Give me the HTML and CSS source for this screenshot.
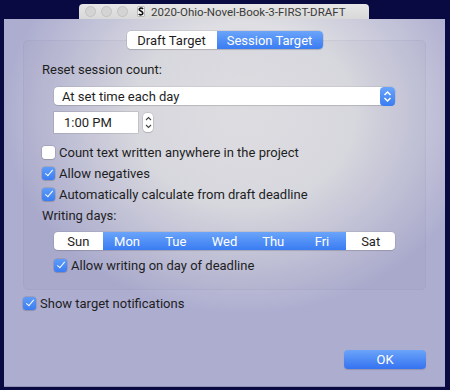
FILE: index.html
```html
<!DOCTYPE html>
<html lang="en">
  <head>
    <meta charset="UTF-8" />
    <title>Project Targets</title>
    <link rel="stylesheet" href="styles.css">
  </head>
  <body>
    <div class="titlebar">
      <div class="lights">
        <span class="light"></span>
        <span class="light"></span>
        <span class="light"></span>
      </div>
      <div class="doc-title">
        <svg class="doc-icon" width="8" height="11" viewBox="0 0 8 11">
          <rect x="0.5" y="0.5" width="7" height="10" rx="1" fill="#f4f4f4" stroke="#999" stroke-width="0.6" />
          <path d="M6 3 C5 1.6 2 1.8 2.2 3.6 C2.4 5.2 5.8 5 5.8 7.2 C5.8 9 3 9.4 1.8 8" fill="none" stroke="#111" stroke-width="1.6" />
        </svg>
        <span>2020-Ohio-Novel-Book-3-FIRST-DRAFT</span>
      </div>
    </div>

    <div class="sheet">
      <div class="tabs">
        <div class="tab">Draft Target</div>
        <div class="tab active">Session Target</div>
      </div>

      <div class="group">
        <div class="label">Reset session count:</div>

        <div class="popup">
          <span>At set time each day</span>
          <span class="popup-arrows">
            <svg width="9" height="13" viewBox="0 0 9 13">
              <path d="M1.5 5 L4.5 2 L7.5 5 M1.5 8 L4.5 11 L7.5 8" fill="none" stroke="#fff" stroke-width="1.5" />
            </svg>
          </span>
        </div>

        <div class="time-row">
          <div class="time-field">1:00 PM</div>
          <div class="stepper">
            <svg width="7" height="15" viewBox="0 0 7 15">
              <path d="M1 5 L3.5 2.5 L6 5 M1 10 L3.5 12.5 L6 10" fill="none" stroke="#444" stroke-width="1.1" />
            </svg>
          </div>
        </div>

        <div class="checks">
          <label class="check"><span class="box"></span>Count text written anywhere in the project</label>
          <label class="check"><span class="box on"></span>Allow negatives</label>
          <label class="check"><span class="box on"></span>Automatically calculate from draft deadline</label>
        </div>

        <div class="label days-label">Writing days:</div>

        <div class="days">
          <div class="day">Sun</div>
          <div class="day on">Mon</div>
          <div class="day on">Tue</div>
          <div class="day on">Wed</div>
          <div class="day on">Thu</div>
          <div class="day on">Fri</div>
          <div class="day">Sat</div>
        </div>

        <label class="check indent"><span class="box on"></span>Allow writing on day of deadline</label>
      </div>

      <label class="check notify"><span class="box on"></span>Show target notifications</label>

      <div class="footer">
        <button class="ok">OK</button>
      </div>
    </div>
  </body>
</html>
```

FILE: styles.css
```css
* {
  box-sizing: border-box;
}

body {
  margin: 0;
  width: 450px;
  height: 390px;
  overflow: hidden;
  background: #0a0a42;
  font-family: Roboto, 'Noto Sans', sans-serif;
  font-size: 13px;
  color: #1e1e1e;
}

.titlebar {
  display: flex;
  align-items: center;
  margin: 4px 0 0 79px;
  width: 290px;
  height: 15px;
  background: linear-gradient(#e6e6e6, #d8d8d8);
  border-radius: 4px 4px 0 0;
  padding-left: 6px;
}

.lights {
  display: flex;
  gap: 5px;
}

.light {
  width: 11px;
  height: 11px;
  border-radius: 50%;
  background: #d4d4d4;
  border: 1px solid #c2c2c2;
}

.doc-title {
  display: flex;
  align-items: center;
  gap: 6px;
  margin-left: 9px;
  color: #3a3a3a;
  font-size: 11.5px;
  white-space: nowrap;
}

.sheet {
  display: flex;
  flex-direction: column;
  margin-left: 4px;
  width: 441px;
  height: 368px;
  padding: 12px 19px 0;
  background:
    radial-gradient(ellipse 240px 200px at 240px 95px, #e4e4e6 0%, #dedee3 45%, rgba(173, 173, 208, 0) 100%),
    #adadd0;
  border-bottom: 1px solid #8f8fb5;
}

.tabs {
  position: relative;
  z-index: 1;
  display: flex;
  align-self: center;
  height: 18px;
  border-radius: 4px;
  background: #fff;
  box-shadow: 0 0 0 0.5px rgba(0, 0, 0, 0.15), 0 1px 1px rgba(0, 0, 0, 0.12);
  overflow: hidden;
}

.tab {
  display: flex;
  align-items: center;
  justify-content: center;
  width: 90px;
  color: #1e1e1e;
}

.tab.active {
  width: 106px;
  color: #fff;
  background: linear-gradient(#6aa4fa, #3a7cf2);
}

.group {
  margin-top: -9px;
  height: 250px;
  padding: 21px 0 0 18px;
  border-radius: 5px;
  background: rgba(120, 120, 150, 0.06);
  border: 1px solid rgba(100, 100, 140, 0.08);
}

.label {
  height: 16px;
  line-height: 16px;
}

.popup {
  display: flex;
  align-items: center;
  justify-content: space-between;
  margin: 9px 0 0 12px;
  width: 341px;
  height: 18px;
  padding-left: 8px;
  background: #fff;
  border-radius: 4px;
  box-shadow: 0 0 0 0.5px rgba(0, 0, 0, 0.12), 0 1px 1px rgba(0, 0, 0, 0.1);
}

.popup-arrows {
  display: flex;
  align-items: center;
  justify-content: center;
  width: 15px;
  height: 19px;
  border-radius: 4px;
  background: linear-gradient(#6aa4fa, #3a7cf2);
}

.time-row {
  display: flex;
  align-items: center;
  gap: 5px;
  margin: 7px 0 0 12px;
}

.time-field {
  width: 84px;
  height: 21px;
  line-height: 21px;
  padding-left: 10px;
  background: #fff;
  box-shadow: 0 0 0 0.5px rgba(0, 0, 0, 0.2);
}

.stepper {
  display: flex;
  align-items: center;
  justify-content: center;
  width: 10px;
  height: 19px;
  background: #fff;
  border-radius: 4px;
  box-shadow: 0 0 0 0.5px rgba(0, 0, 0, 0.18), 0 1px 1px rgba(0, 0, 0, 0.1);
}

.checks {
  display: flex;
  flex-direction: column;
  gap: 7px;
  margin-top: 12px;
}

.check {
  display: flex;
  align-items: center;
  gap: 4px;
  height: 14px;
}

.box {
  flex: none;
  width: 13px;
  height: 13px;
  border-radius: 3px;
  background: #fff;
  box-shadow: 0 0 0 0.5px rgba(0, 0, 0, 0.2), 0 1px 1px rgba(0, 0, 0, 0.08);
  position: relative;
}

.box.on {
  background: linear-gradient(#5f9cf9, #3b7cf1);
}

.box.on::after {
  content: '';
  position: absolute;
  left: 4.5px;
  top: 1.5px;
  width: 3px;
  height: 7px;
  border: solid #fff;
  border-width: 0 1.6px 1.6px 0;
  transform: rotate(40deg);
}

.days-label {
  margin-top: 7px;
}

.days {
  display: flex;
  margin: 8px 0 0 12px;
  width: 341px;
  height: 18px;
  background: #fff;
  border-radius: 4px;
  box-shadow: 0 0 0 0.5px rgba(0, 0, 0, 0.12), 0 1px 1px rgba(0, 0, 0, 0.1);
  overflow: hidden;
}

.day {
  flex: 1;
  display: flex;
  align-items: center;
  justify-content: center;
}

.day.on {
  color: #fff;
  background: linear-gradient(#6aa4fa, #3a7cf2);
}

.check.indent {
  margin: 8px 0 0 12px;
}

.check.notify {
  margin-top: 6px;
}

.footer {
  display: flex;
  justify-content: flex-end;
  margin-top: 40px;
}

.ok {
  width: 82px;
  height: 19px;
  border: none;
  border-radius: 4px;
  font-family: inherit;
  font-size: 13px;
  color: #fff;
  background: linear-gradient(#6aa4fa, #3572f0);
  box-shadow: 0 1px 1px rgba(0, 0, 0, 0.15);
}
```
